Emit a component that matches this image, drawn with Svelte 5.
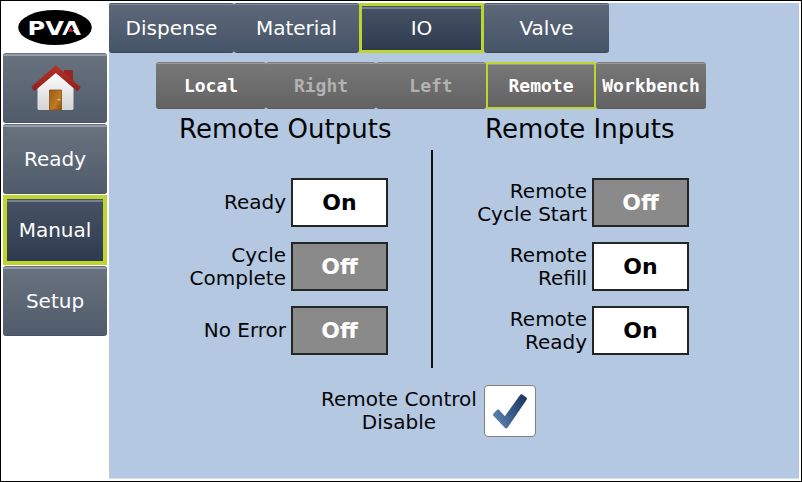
<script>
  const tabs = ['Dispense', 'Material', 'IO', 'Valve'];
  const stations = [
    { name: 'Local' },
    { name: 'Right', disabled: true },
    { name: 'Left', disabled: true },
    { name: 'Remote' },
    { name: 'Workbench' }
  ];
  const groups = [
    {
      side: 'outputs',
      title: 'Remote Outputs',
      rows: [
        { label: ['Ready'], on: true },
        { label: ['Cycle', 'Complete'], on: false },
        { label: ['No Error'], on: false }
      ]
    },
    {
      side: 'inputs',
      title: 'Remote Inputs',
      rows: [
        { label: ['Remote', 'Cycle Start'], on: false },
        { label: ['Remote', 'Refill'], on: true },
        { label: ['Remote', 'Ready'], on: true }
      ]
    }
  ];
  let page = $state('Manual');
  let tab = $state('IO');
  let station = $state('Remote');
  let disabled = $state(true);
</script>

<div class="screen">
  <aside>
    <div class="logo">
      <svg width="104" height="50" viewBox="0 0 104 50">
        <ellipse cx="52" cy="24.5" rx="36.8" ry="17.5" fill="#000" />
        <text class="mark" x="24.6" y="31.9" textLength="53.4" lengthAdjust="spacingAndGlyphs">PVA</text>
        <path d="M67.6 22.6L72.8 32.4H62.4Z" fill="#000" />
        <path d="M67.6 24.2L70.2 28.8H65Z" fill="#d81f2a" />
      </svg>
    </div>
    <nav>
      <button class="side" aria-label="Home">
        <svg class="house" width="54" height="50" viewBox="0 0 54 50">
          <defs>
            <linearGradient id="wall" x2="0" y2="1"><stop stop-color="#fff" /><stop offset="1" stop-color="#d3d3d3" /></linearGradient>
            <linearGradient id="roof" x2="0" y2="1"><stop stop-color="#b93028" /><stop offset="1" stop-color="#8f211c" /></linearGradient>
            <linearGradient id="door" x2="1" y2="1"><stop stop-color="#9b5b10" /><stop offset=".6" stop-color="#bd7a26" /><stop offset="1" stop-color="#8c4f0b" /></linearGradient>
          </defs>
          <path d="M35 7Q35 6 36 6H43Q44 6 44 7V21L35 14Z" fill="#98251f" />
          <path d="M8.5 24L27 8L44.5 24V44.5Q44.5 46 43 46H10Q8.5 46 8.5 44.5Z" fill="url(#wall)" />
          <path d="M26.8 1.2L2.5 22.5Q3 25.5 5.5 27L26.8 9L48.4 27.2L51.8 23.2Z" fill="url(#roof)" />
          <path d="M20.5 46V26H32.5V46Z" fill="url(#door)" stroke="#85500f" stroke-width=".8" />
          <path d="M28.5 35.8H31.3" stroke="#f5d6a0" stroke-width="1.2" />
        </svg>
      </button>
      {#each ['Ready', 'Manual', 'Setup'] as name}
        <button class="side" class:active={page === name} onclick={() => (page = name)}><span>{name}</span></button>
      {/each}
    </nav>
  </aside>

  <main>
    <nav class="tabs">
      {#each tabs as name}
        <button class="tab" class:active={tab === name} onclick={() => (tab = name)}><span>{name}</span></button>
      {/each}
    </nav>
    <nav class="stations">
      {#each stations as s}
        <button class="station" class:active={station === s.name} disabled={s.disabled} onclick={() => (station = s.name)}><span>{s.name}</span></button>
      {/each}
    </nav>

    <div class="groups">
      {#each groups as g}
        <section class={g.side}>
          <h2>{g.title}</h2>
          <div class="rows">
            {#each g.rows as row}
              <div class="row">
                <div class="label">{#each row.label as line}<div>{line}</div>{/each}</div>
                <div class="value" class:on={row.on}>{row.on ? 'On' : 'Off'}</div>
              </div>
            {/each}
          </div>
        </section>
      {/each}
    </div>

    <div class="disable">
      <div class="caption"><div>Remote Control</div><div>Disable</div></div>
      <button class="check" aria-label="Remote Control Disable" aria-pressed={disabled} onclick={() => (disabled = !disabled)}>
        {#if disabled}
          <svg width="50" height="50" viewBox="0 0 50 50">
            <defs><linearGradient id="tick" x1="0" y1=".7" x2="1" y2=".2"><stop stop-color="#5b82ad" /><stop offset=".5" stop-color="#385c88" /><stop offset="1" stop-color="#1c385f" /></linearGradient></defs>
            <path d="M8.5 27.5L12.2 23.8Q13.2 23 14.2 24L19.8 30.2L35.3 8.7Q36.2 7.8 37.3 8.5L41.4 11.6Q42.3 12.5 41.6 13.7L22.7 41.5Q21.4 43.2 19.8 41.7L8.6 30Q7.6 28.7 8.5 27.5Z" fill="url(#tick)" />
          </svg>
        {/if}
      </button>
    </div>
  </main>
</div>

<style>
  :global(body) { margin: 0; }
  .screen, .screen * { box-sizing: border-box; }
  .screen {
    display: flex;
    width: 802px;
    height: 482px;
    border: 1px solid #000;
    padding: 2px 1px 2px 2px;
    background: #fff;
    font: 20px/23px "DejaVu Sans", sans-serif;
    color: #050505;
  }
  button { margin: 0; padding: 0; border: 0; font: inherit; color: #fff; }
  svg { display: block; }
  aside { width: 106px; flex: none; }
  .logo { height: 50px; }
  .mark { font: bold 19px "DejaVu Sans", sans-serif; fill: #fff; }
  .house { margin: 2px 0 0 2px; }
  aside nav { display: flex; flex-direction: column; gap: 1px; width: 104px; }
  .side, .tab, .station {
    display: flex;
    align-items: center;
    justify-content: center;
    border-radius: 3px;
  }
  .side {
    height: 70px;
    background: linear-gradient(#8d97a5, #9aa3b0) 0 0 / 100% 2px no-repeat, linear-gradient(#69727f, #505c6b);
    border-top: 1px solid #68717e;
    border-bottom: 1px solid #465262;
  }
  .side.active, .tab.active {
    border: 4px solid #bdd62f;
    border-radius: 0;
    background: linear-gradient(#768091, #768091) 0 1px / 100% 2px no-repeat, linear-gradient(#485265, #2e3b4f);
    background-clip: padding-box;
    background-origin: padding-box;
  }
  .tabs { display: flex; height: 50px; }
  .tab {
    width: 125px;
    background: linear-gradient(#7e8a99, #7e8a99) 0 0 / 100% 1px no-repeat, linear-gradient(#5d6979, #465468);
    border-top: 1px solid #4f5b6b;
    border-bottom: 1px solid #3c4a5d;
  }
  .tab.active { border-width: 3px; }
  main { width: 690px; height: 476px; background: #b4c8e2; border-bottom: 1px solid #d3e0ee; }
  .stations { display: flex; margin: 9px 0 0 47px; height: 47px; }
  .station {
    width: 110px;
    font: bold 18px/20px "DejaVu Sans Mono", monospace;
    background: linear-gradient(#9a9a9a, #9a9a9a) 0 0 / 100% 1px no-repeat, linear-gradient(#787878, #636363);
    border-top: 1px solid #808080;
    border-bottom: 1px solid #5b5b5b;
  }
  .station:disabled { color: #b2b2b2; }
  .station.active { border: 2px solid #bdd62f; border-radius: 0; }
  .groups { display: flex; height: 259px; }
  section { height: 259px; }
  .outputs { width: 324px; }
  .inputs { width: 300px; }
  h2 { margin: 5px 0 0; font-size: 26px; line-height: 30px; font-weight: 400; }
  .outputs h2 { padding-left: 70px; }
  .inputs h2 { padding-left: 52px; }
  .rows { height: 218px; margin-top: 6px; padding-top: 28px; display: flex; flex-direction: column; gap: 15px; }
  .outputs .rows { border-right: 2px solid #111; padding-right: 43px; }
  .inputs .rows { padding-right: 44px; }
  .row { display: flex; align-items: center; justify-content: flex-end; gap: 5px; height: 49px; }
  .label { text-align: right; white-space: nowrap; }
  .value {
    width: 97px;
    height: 49px;
    border: 2px solid #242624;
    background: #8a8a8a;
    color: #fff;
    font-size: 22px;
    font-weight: bold;
    line-height: 45px;
    text-align: center;
  }
  .value.on { background: #fff; color: #000; }
  .disable { display: flex; align-items: center; gap: 7px; margin: 17px 0 0 212px; height: 52px; }
  .caption { text-align: center; white-space: nowrap; }
  .check { width: 52px; height: 52px; border: 1px solid #7d8084; border-radius: 4px; background: #fff; }
</style>
